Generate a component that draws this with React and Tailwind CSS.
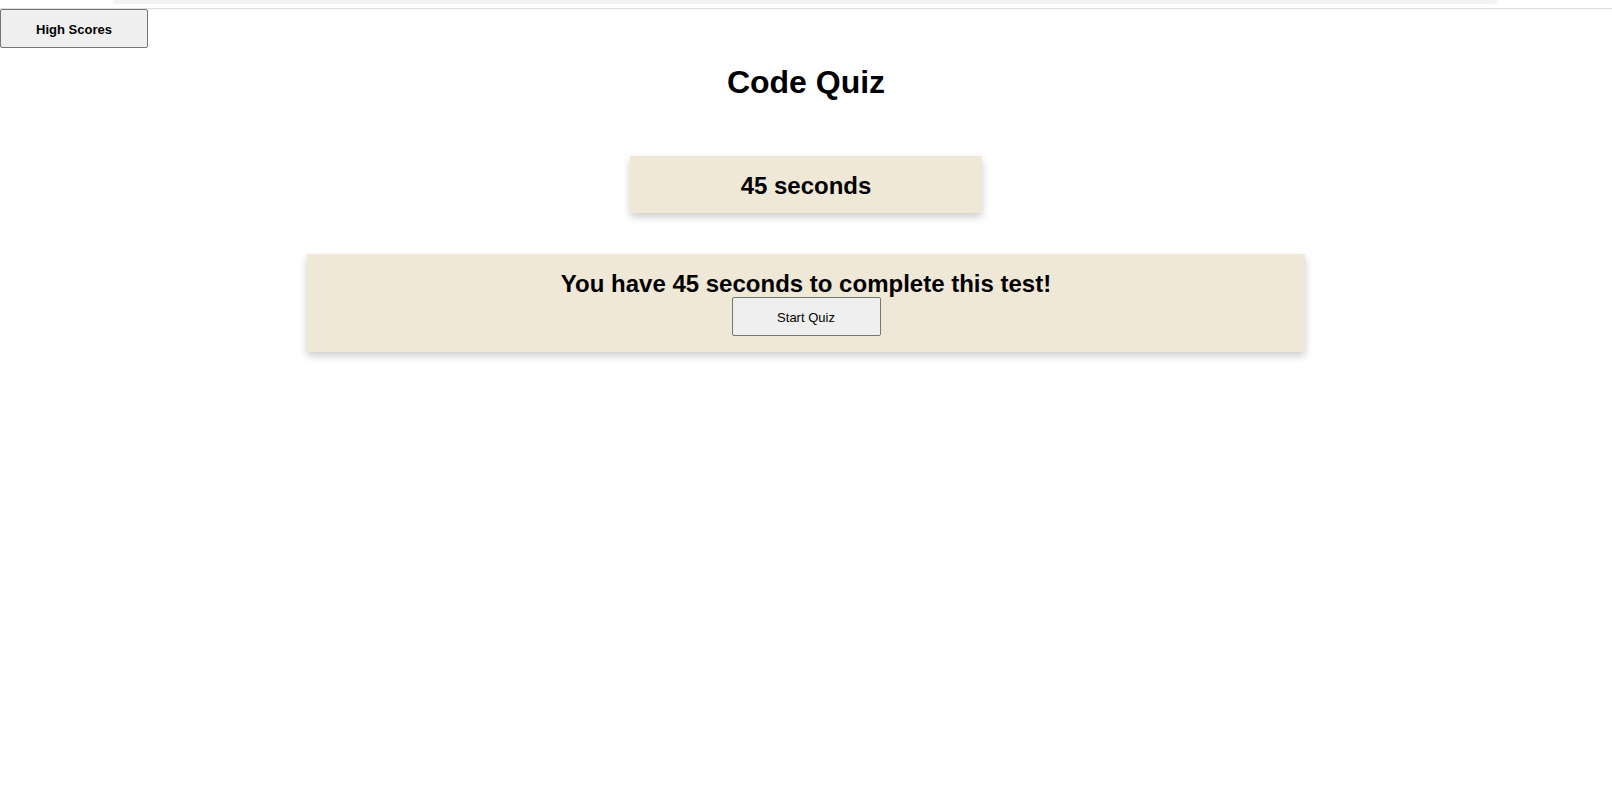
export default function App() {
  return (
    <div className="min-h-[801px] bg-white text-black" style={{ fontFamily: '"Liberation Sans", Arial, sans-serif' }}>
      <div className="h-[9px] border-b border-[#dadce0] pl-[113px]">
        <div className="w-[1385px] h-[4px] bg-[#f1f3f4] rounded-b-[10px]"></div>
      </div>
      <div>
        <button className="w-[148px] h-[39px] pt-[2px] bg-[#efefef] border border-[#767676] rounded-[2px] text-[13px] font-bold">
          High Scores
        </button>
      </div>
      <h1 className="text-center text-[32px] font-bold leading-[37px] mt-[16px]">Code Quiz</h1>
      <div className="flex justify-center mt-[55px]">
        <div className="w-[352px] bg-[#f0e8d7] pt-[16px] pb-[14px] text-center shadow-[0_4px_8px_rgba(0,0,0,0.2)]">
          <h2 className="text-[24px] font-bold leading-[27px]">45 seconds</h2>
        </div>
      </div>
      <div className="flex justify-center mt-[41px]">
        <div className="w-[998px] bg-[#f0e8d7] py-[16px] flex flex-col items-center shadow-[0_4px_8px_rgba(0,0,0,0.2)]">
          <h2 className="text-[24px] font-bold leading-[27px]">You have 45 seconds to complete this test!</h2>
          <button className="w-[149px] h-[39px] pt-[2px] bg-[#efefef] border border-[#767676] rounded-[2px] text-[13px]">
            Start Quiz
          </button>
        </div>
      </div>
    </div>
  );
}
